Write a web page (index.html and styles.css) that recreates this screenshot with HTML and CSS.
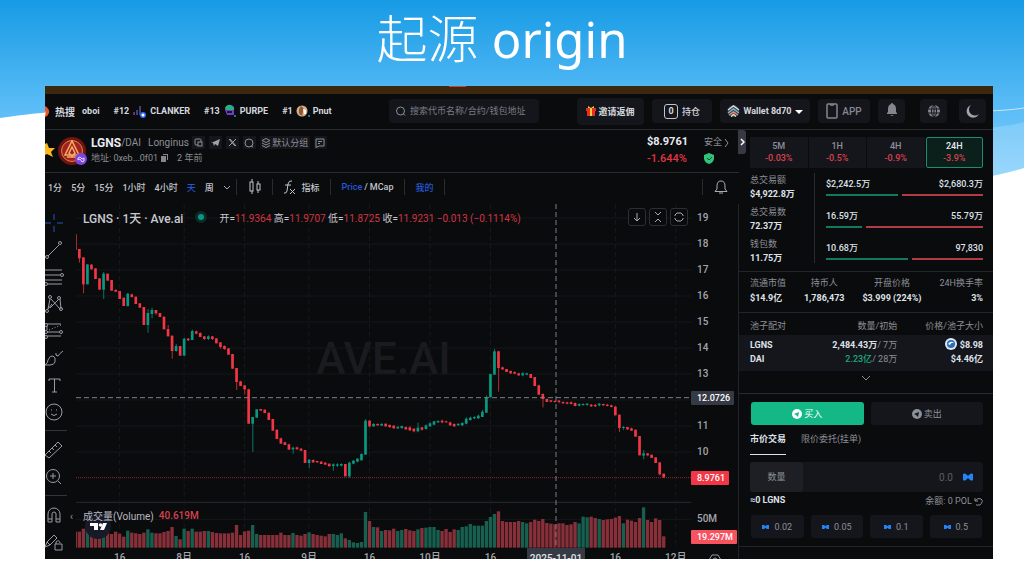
FILE: index.html
```html
<!DOCTYPE html>
<html lang="zh-CN">
<head>
    <meta charset="UTF-8">
    <meta name="viewport" content="width=device-width, initial-scale=1.0">
    <title>起源 origin</title>
    <link rel="stylesheet" href="styles.css">
</head>
<body>
    <!-- Slide background -->
    <svg class="slide-bg" viewBox="0 0 1024 200" preserveAspectRatio="none" aria-hidden="true">
        <defs>
            <linearGradient id="sky" x1="0" y1="0" x2="0" y2="1">
                <stop offset="0" stop-color="#179be5"/>
                <stop offset="0.6" stop-color="#5abcf6"/>
                <stop offset="1" stop-color="#84cffc"/>
            </linearGradient>
        </defs>
        <path fill="url(#sky)" d="M0 0H1024V168Q1000 175 980 178H60V111Q20 115 0 118Z"/>
        <path fill="#fff" fill-opacity="0.18" d="M980 128Q1005 127 1024 122V168Q1000 175 980 178Z"/>
        <path fill="none" stroke="#c4e6fc" d="M980 111Q1005 111 1024 108"/>
    </svg>

    <h1 class="slide-title">起源 <span>origin</span></h1>

    <div class="screen">
        <div class="strip"><span></span></div>

        <!-- Top bar -->
        <header class="topbar">
            <div class="ticker">
                <svg class="fire" width="5" height="12" viewBox="0 0 5 12"><path d="M0 1Q5 4 4 8Q3 11 0 12Z" fill="#f0522f"/><path d="M0 6Q2 8 0 11Z" fill="#ffb347"/></svg>
                <span class="hot">热搜</span>
                <span class="coin">oboi</span>
                <span class="coin">#12
                    <svg width="15" height="14" viewBox="0 0 15 14"><path d="M2 8v3M5 6v5M8 2v9" stroke="#4b3a78" stroke-width="2"/><circle cx="11" cy="11" r="3" fill="#2b6df0"/><circle cx="11" cy="11" r="1.5" fill="#fff"/></svg>
                    CLANKER</span>
                <span class="coin">#13
                    <svg width="14" height="14" viewBox="0 0 14 14"><path d="M2 6Q2 1 7 1T11 6V11H4Z" fill="#6c3fc4"/><path d="M2 4Q4 0 8 1L11 4V6H3Z" fill="#27b17e"/><path d="M4 8h5" stroke="#1c1330" stroke-width="2"/><circle cx="12" cy="12" r="1" fill="#289bb0"/></svg>
                    PURPE</span>
                <span class="coin">#1
                    <svg width="14" height="14" viewBox="0 0 14 14"><circle cx="6" cy="7" r="5.5" fill="#d9b28c"/><path d="M5 2Q9 4 7 8T9 12L4 11Q1 6 5 2Z" fill="#8b5a35"/><path d="M7 5l3 1v4H8Z" fill="#fff"/><circle cx="13" cy="12" r="1" fill="#289bb0"/></svg>
                    Pnut</span>
            </div>
            <label class="search">
                <svg width="10" height="10" viewBox="0 0 10 10" fill="none" stroke="#8d8f96"><circle cx="4.5" cy="5" r="4"/><path d="M7.5 8L9 9.5"/></svg>
                <input type="text" aria-label="搜索" placeholder="搜索代币名称/合约/钱包地址">
            </label>
            <nav class="actions">
                <button class="box invite">
                    <svg width="10" height="10" viewBox="0 0 10 10"><path d="M1 4h8v6H1zM0 2h10v3H0z" fill="#e5301f"/><path d="M4 2h2v8H4z" fill="#ffc933"/><path d="M5 2L2 0v2zM5 2l3-2v2z" fill="#ffc933"/></svg>
                    邀请返佣
                </button>
                <button class="box hold"><b class="count">0</b>持仓</button>
                <button class="box wallet">
                    <svg width="13" height="12" viewBox="0 0 13 12" fill="none" stroke-width="1.5"><circle cx="6.5" cy="6" r="6" fill="#2a4350"/><path d="M1 5l5.500-4L12 5" stroke="#e9d8cb"/><path d="M1 8l5.500-4L12 8" stroke="#7eb7cb"/><path d="M2 10l4.500-3 4.500 3" stroke="#ef8b72"/><path d="M4 11.500l2.500-2 2.500 2" stroke="#e9d8cb"/></svg>
                    Wallet 8d70
                    <svg width="8" height="5" viewBox="0 0 8 5"><path d="M0 1h8L4 5z" fill="#fff"/></svg>
                </button>
                <button class="box app">
                    <svg width="12" height="16" viewBox="0 0 12 16" fill="none" stroke="#85878d" stroke-width="1.5"><rect x="1" y="1" width="10" height="14" rx="1"/><path d="M4 2h4"/></svg>
                    APP
                </button>
                <button class="box icon bell" aria-label="通知">
                    <svg width="12" height="13" viewBox="0 0 12 13" fill="#85878d"><path d="M6 0Q7 0 7 1Q10 2 10 6V9L11 10V11H1V10L2 9V6Q2 2 5 1Q5 0 6 0ZM4 12h4l-2 1z"/></svg>
                </button>
                <button class="box icon globe" aria-label="语言">
                    <svg width="12" height="12" viewBox="0 0 12 12"><circle cx="6" cy="6" r="6" fill="#85878d"/><g fill="none" stroke="#15161c"><ellipse cx="6" cy="6" rx="2.5" ry="6"/><path d="M6 0v12M0 4h12M0 8h12"/></g></svg>
                </button>
                <button class="box icon moon" aria-label="主题">
                    <svg width="13" height="13" viewBox="0 0 13 13"><path d="M5 0A6.5 6.5 0 1 0 13 9A6 6 0 0 1 5 0Z" fill="#a3a5aa"/></svg>
                </button>
            </nav>
        </header>

        <div class="content">
            <main class="left-side">
                <!-- Token summary -->
                <section class="token">
                    <svg class="star" width="10" height="16" viewBox="0 0 10 16"><path d="M2 1l2 5h6L6 10l2 5-6-3-2 1V2z" fill="#f9b91b"/></svg>
                    <svg class="logo" width="30" height="30" viewBox="0 0 30 30"><circle cx="14" cy="14" r="14" fill="#6f1313"/><circle cx="14" cy="14" r="10.500" fill="#a5221c" stroke="#d98a45"/><path d="M14 4L7 18h14zM14 10l-3 6 3 3 3-3zM9 20h10" fill="none" stroke="#f0b069" stroke-width="1.500"/><circle cx="23" cy="22" r="6" fill="#7d45e0"/><path d="M20 21l2-1 2 2 2-1v3l-2 1-2-3-2 1z" fill="none" stroke="#fff" stroke-width="0.8"/></svg>
                    <div class="token-info">
                        <div class="token-line">
                            <strong>LGNS</strong><span>/DAI</span><span class="full-name">Longinus</span>
                            <a href="#" class="chip" aria-label="网站"><svg width="9" height="9" viewBox="0 0 9 9" fill="none" stroke="#8d8f96"><rect x="1" y="1" width="6" height="6" rx="1"/><rect x="4" y="4" width="4" height="4" fill="#15161c"/></svg></a>
                            <a href="#" class="chip" aria-label="Telegram"><svg width="9" height="9" viewBox="0 0 9 9"><path d="M0 5L9 1 7 8 4 6 3 8 2 5z" fill="#a0a2a8"/></svg></a>
                            <a href="#" class="chip" aria-label="X"><svg width="9" height="9" viewBox="0 0 9 9" fill="none" stroke="#a0a2a8"><path d="M1 1l6 7M2 1l6 7M8 1L1 8"/></svg></a>
                            <a href="#" class="chip" aria-label="查找"><svg width="10" height="10" viewBox="0 0 10 10" fill="none" stroke="#8d8f96"><circle cx="5" cy="5" r="4"/><path d="M7 8l2 1"/></svg></a>
                            <button class="chip group"><svg width="10" height="10" viewBox="0 0 10 10" fill="none" stroke="#8d8f96"><path d="M5 0.500l4 2-4 2-4-2zM1 5l4 2 4-2M1 7.500l4 2 4-2"/></svg>默认分组</button>
                            <button class="chip" aria-label="备注"><svg width="10" height="10" viewBox="0 0 10 10" fill="none" stroke="#8d8f96"><path d="M1 1h8v7H4L1 9.500zM3 3.500h4M3 5.500h2"/></svg></button>
                        </div>
                        <div class="token-line addr">
                            <span>地址: 0xeb...0f01</span>
                            <svg width="7" height="8" viewBox="0 0 7 8" fill="#85878d"><path d="M2 0h5v6H6V1H2zM0 2h5v6H0z"/></svg>
                            <span class="age">2 年前</span>
                        </div>
                    </div>
                    <div class="price"><b>$8.9761</b><em>-1.644%</em></div>
                    <div class="safe">
                        <span>安全<svg width="5" height="8" viewBox="0 0 5 8" fill="none" stroke="#8d8f96"><path d="M1 0l3 4-3 4"/></svg></span>
                        <svg width="10" height="11" viewBox="0 0 10 11"><path d="M5 0l5 2v4Q9 10 5 11Q1 10 0 6V2z" fill="#2fc47c"/><path d="M3 5l2 2 3-3" fill="none" stroke="#0a4c2c"/></svg>
                    </div>
                </section>

                <!-- Chart toolbar -->
                <div class="toolbar">
                    <div class="ranges">
                        <button>1分</button><button>5分</button><button>15分</button><button>1小时</button><button>4小时</button><button class="on">天</button><button>周</button>
                        <svg width="8" height="5" viewBox="0 0 8 5" fill="none" stroke="#a9abb3"><path d="M1 1l3 3 3-3"/></svg>
                    </div>
                    <button class="cell candle" aria-label="图表类型"><svg width="12" height="16" viewBox="0 0 12 16" fill="none" stroke="#c3c5cc"><path d="M3 0v3M3 12v3M9 2v3M9 11v3"/><rect x="1" y="3" width="3" height="9"/><rect x="8" y="5" width="3" height="6"/></svg></button>
                    <button class="cell fx"><svg width="13" height="15" viewBox="0 0 13 15" fill="none" stroke="#c3c5cc"><path d="M9 1Q6 0 5 4L4 11Q3 14 1 13M2 5h6M7 9l5 5M12 9l-5 5"/></svg>指标</button>
                    <span class="cell pm"><button class="on">Price</button> / <button>MCap</button></span>
                    <button class="cell mine on">我的</button>
                    <button class="cell alarm" aria-label="提醒"><svg width="14" height="15" viewBox="0 0 14 15" fill="none" stroke="#a9abb3"><path d="M1 11.500L3 9V6Q3 1 7 1T11 6V9L13 11.500ZM5 13h4"/></svg></button>
                </div>

                <!-- Chart -->
                <div class="chart">
                    <div class="tools">
                        <button aria-label="十字"><svg viewBox="0 0 20 20"><path d="M10 1v6M10 13v6M1 10h6M13 10h6"/></svg></button>
                        <button aria-label="线"><svg viewBox="0 0 20 20"><path d="M4 16L15 5"/><circle cx="3" cy="17" r="1.500"/><circle cx="16" cy="3" r="1.500"/></svg></button>
                        <button aria-label="斐波那契"><svg viewBox="0 0 20 20"><path d="M1 3h17M1 8h15M1 13h17M4 17h14"/><circle cx="18" cy="8" r="1.500"/><circle cx="2" cy="17" r="1.500"/></svg></button>
                        <button aria-label="形态"><svg viewBox="0 0 20 20"><path d="M4 15L6 5M7 5l9 10M6 14l9-9M16 5l1 10M4 15l4-5"/><circle cx="3" cy="17" r="1.500"/><circle cx="6" cy="3" r="1.500"/><circle cx="15" cy="4" r="1.500"/><circle cx="17" cy="15" r="1.500"/></svg></button>
                        <button aria-label="预测"><svg viewBox="0 0 20 20"><path d="M3 3h14M3 11h12M3 15h14M3 5v4"/><path d="M5 9l12-5" stroke-dasharray="1 2"/><circle cx="2" cy="4" r="1.500"/><circle cx="2" cy="11" r="1.500"/><circle cx="17" cy="11" r="1.500"/><circle cx="2" cy="16" r="1.500"/></svg></button>
                        <button aria-label="画笔"><svg viewBox="0 0 20 20"><path d="M1 17Q4 15 4 12Q6 7 9 8T11 14Q10 17 6 17ZM12 5Q11 8 14 8Q15 6 19 3"/></svg></button>
                        <button aria-label="文字"><svg viewBox="0 0 20 20"><path d="M5 6V4h11v2M10.500 4v13M8 17h5"/></svg></button>
                        <button aria-label="表情"><svg viewBox="0 0 20 20"><circle cx="10" cy="10" r="8"/><path d="M7 8h1M12 8h1M7 12q3 3 6 0"/></svg></button>
                        <hr>
                        <button aria-label="测量"><svg viewBox="0 0 20 20"><path d="M1 15L14 2l4 4L5 18zM5 11l2 2M8 8l2 2M11 5l2 2"/></svg></button>
                        <button aria-label="放大"><svg viewBox="0 0 20 20"><circle cx="9" cy="9" r="6.500"/><path d="M14 14l3 3M9 6v6M6 9h6"/></svg></button>
                        <hr>
                        <button aria-label="磁铁"><svg viewBox="0 0 20 20"><path d="M4 17V9a6 6 0 0 1 12 0v8h-4V9a2 2 0 0 0-4 0v8zM4 14h4M12 14h4"/></svg></button>
                        <button aria-label="锁定"><svg viewBox="0 0 20 20"><path d="M1 15l2-5 7-7 3 3-7 7zM3 10l3 3M11 12h7v6h-7zM12 12v-2q3-3 4 1"/></svg></button>
                    </div>

                    <div class="plot">
                        <div class="watermark">AVE.AI</div>
                        <svg id="plot" viewBox="0 12 1845 1032" preserveAspectRatio="none"></svg>
                        <div class="legend">
                            <span class="pair">LGNS · 1天 · Ave.ai</span>
                            <i class="live"></i>
                            <span class="ohlc">开=<b>11.9364</b> 高=<b>11.9707</b> 低=<b>11.8725</b> 收=<b>11.9231</b> <b>−0.013 (−0.1114%)</b></span>
                        </div>
                        <div class="pane-buttons">
                            <button aria-label="下移"><svg width="12" height="12" viewBox="0 0 12 12"><path d="M6 2v8M3 7l3 3 3-3"/></svg></button>
                            <button aria-label="折叠"><svg width="12" height="12" viewBox="0 0 12 12"><path d="M3 1l3 3 3-3M3 11l3-3 3 3"/></svg></button>
                            <button aria-label="最大化"><svg width="12" height="12" viewBox="0 0 12 12"><path d="M2 5V4l2-2h4l2 2v1M2 7v1l2 2h4l2-2V7"/></svg></button>
                        </div>
                        <div class="volume-legend"><span>成交量(Volume)</span><b>40.619M</b></div>
                        <svg class="tv" width="26" height="26" viewBox="0 0 26 26"><circle cx="13" cy="13" r="13" fill="#181b27"/><path d="M5 10h8v7h-4v-4H5zM18 10h4l-3 7h-4z" fill="#fff"/><circle cx="15.500" cy="12" r="1.800" fill="#fff"/></svg>
                        <span class="fold">‹</span>
                    </div>

                    <div class="price-axis" id="price-axis"></div>
                    <div class="time-axis" id="time-axis"></div>
                    <button class="axis-gear" aria-label="设置"><svg width="12" height="12" viewBox="0 0 12 12" fill="none" stroke="#9a9ca4"><path d="M3 1h6l3 5-3 5H3L0 6z"/><circle cx="6" cy="6" r="2"/></svg></button>
                </div>
            </main>

            <!-- Trade panel -->
            <aside class="panel">
                <button class="handle" aria-label="收起"><svg width="5" height="8" viewBox="0 0 5 8" fill="none" stroke="#fff" stroke-width="1.500"><path d="M1 1l3 3-3 3"/></svg></button>
                <div class="periods">
                    <button>5M<b>-0.03%</b></button>
                    <button>1H<b>-0.5%</b></button>
                    <button>4H<b>-0.9%</b></button>
                    <button class="on">24H<b>-3.9%</b></button>
                </div>

                <div class="stats">
                    <dl>
                        <dt>总交易额</dt><dd>$4,922.8万</dd>
                        <dt>总交易数</dt><dd>72.37万</dd>
                        <dt>钱包数</dt><dd>11.75万</dd>
                    </dl>
                    <div class="ratios">
                        <div class="ratio"><span>$2,242.5万</span><span>$2,680.3万</span><i style="width: 46%"></i><i></i></div>
                        <div class="ratio"><span>16.59万</span><span>55.79万</span><i style="width: 23%"></i><i></i></div>
                        <div class="ratio"><span>10.68万</span><span>97,830</span><i style="width: 52%"></i><i></i></div>
                    </div>
                </div>

                <div class="market">
                    <div>流通市值<b>$14.9亿</b></div>
                    <div>持币人<b>1,786,473</b></div>
                    <div>开盘价格<b>$3.999 (224%)</b></div>
                    <div>24H换手率<b>3%</b></div>
                </div>

                <table class="pool">
                    <thead>
                        <tr><th>池子配对</th><th>数量/初始</th><th>价格/池子大小</th></tr>
                    </thead>
                    <tbody>
                        <tr><td>LGNS</td><td>2,484.43万<span>/ 7万</span></td><td><svg width="12" height="12" viewBox="0 0 12 12"><circle cx="6" cy="6" r="6" fill="#dce9f5"/><circle cx="6" cy="6" r="4" fill="#2f6db5"/><path d="M3 6q3-4 6-1q-3-1-4 2z" fill="#fff"/></svg> $8.98</td></tr>
                        <tr><td>DAI</td><td><em>2.23亿</em><span>/ 28万</span></td><td>$4.46亿</td></tr>
                    </tbody>
                </table>
                <button class="more" aria-label="展开"><svg width="10" height="6" viewBox="0 0 10 6" fill="none" stroke="#8d8f96"><path d="M1 1l4 4 4-4"/></svg></button>

                <div class="sides">
                    <button class="buy"><svg width="10" height="10" viewBox="0 0 10 10"><circle cx="5" cy="5" r="5" fill="#fff"/><path d="M2 5l5-2-1 5-2-2z" fill="#14b886"/></svg>买入</button>
                    <button class="sell"><svg width="10" height="10" viewBox="0 0 10 10"><circle cx="5" cy="5" r="5" fill="#8d8f96"/><path d="M2 5l5-2-1 5-2-2z" fill="#15161c"/></svg>卖出</button>
                </div>
                <div class="modes">
                    <button class="on">市价交易</button>
                    <button>限价委托(挂单)</button>
                </div>
                <div class="amount">
                    <label for="qty">数量</label>
                    <input id="qty" type="text" placeholder="0.0">
                    <svg width="10" height="8" viewBox="0 0 10 8"><path d="M0 1q1-1 3 0l2 2 2-2q2-1 3 0v6q-1 1-3 0L5 5 3 7Q1 8 0 7z" fill="#2284f5"/></svg>
                </div>
                <div class="balance">
                    <b>≈0 LGNS</b>
                    <span>余额: 0 POL <svg width="9" height="9" viewBox="0 0 9 9" fill="none" stroke="#8d8f96"><path d="M1 1v3h3M1 4Q4 0 7 2T6 8H2"/></svg></span>
                </div>
                <div class="quick">
                    <button><svg width="7" height="6" viewBox="0 0 10 8"><path d="M0 1h3l2 2 2-2h3v6H7L5 5 3 7H0z" fill="#2284f5"/></svg>0.02</button>
                    <button><svg width="7" height="6" viewBox="0 0 10 8"><path d="M0 1h3l2 2 2-2h3v6H7L5 5 3 7H0z" fill="#2284f5"/></svg>0.05</button>
                    <button><svg width="7" height="6" viewBox="0 0 10 8"><path d="M0 1h3l2 2 2-2h3v6H7L5 5 3 7H0z" fill="#2284f5"/></svg>0.1</button>
                    <button><svg width="7" height="6" viewBox="0 0 10 8"><path d="M0 1h3l2 2 2-2h3v6H7L5 5 3 7H0z" fill="#2284f5"/></svg>0.5</button>
                </div>
            </aside>
        </div>
    </div>

    <script src="chart.js"></script>
</body>
</html>
```

FILE: styles.css
```css
body {
    margin: 0;
    font-family: Roboto, "Noto Sans CJK SC", sans-serif;
    font-size: 10px;
    color: #d5d7de;
    background-color: white;
}
button {
    margin: 0;
    padding: 0;
    border: none;
    background: none;
    font: inherit;
    color: inherit;
    white-space: nowrap;
    cursor: pointer;
}
input {
    border: none;
    background: none;
    font: inherit;
    color: inherit;
    outline: none;
    min-width: 0;
}
svg {
    flex-shrink: 0;
}
em, i {
    font-style: normal;
}

/* Slide */
.slide-bg {
    position: absolute;
    top: 0;
    left: 0;
    width: 100%;
    height: 200px;
    z-index: -1;
}
.slide-title {
    margin: 0;
    padding-right: 20px;
    height: 86px;
    line-height: 76px;
    text-align: center;
    font-family: "Open Sans", "Noto Sans CJK SC", sans-serif;
    font-size: 51px;
    font-weight: 300;
    color: white;
}
.slide-title span {
    font-family: "Noto Sans", sans-serif;
    font-size: 49px;
    font-weight: 400;
}
.screen {
    margin: 0 31px 7px 45px;
    background-color: #0a0b0d;
    overflow: hidden;
}
.strip {
    height: 8px;
    background-color: #3b280f;
}
.strip span {
    display: block;
    width: 17px;
    height: 1px;
    margin-left: 404px;
    background-color: #c9452f;
}

/* Top bar */
.topbar {
    display: flex;
    align-items: center;
    height: 34px;
    padding-bottom: 1px;
    border-bottom: 1px solid #292b30;
}
.ticker {
    display: flex;
    align-items: center;
    width: 344px;
    font-weight: 700;
    white-space: nowrap;
}
.ticker .hot {
    margin: 0 7px 0 5px;
}
.coin {
    display: flex;
    align-items: center;
    gap: 3px;
    margin-right: 14px;
    font-size: 9px;
}
.search {
    display: flex;
    align-items: center;
    gap: 4px;
    width: 143px;
    height: 24px;
    padding-left: 7px;
    border-radius: 4px;
    background-color: #15161c;
}
.search input {
    flex: 1;
    padding: 0;
    font-size: 9px;
}
.search input::placeholder {
    color: #7a7c84;
}
.actions {
    display: flex;
    align-items: center;
    gap: 8px;
    margin-left: auto;
    margin-right: 7px;
}
.box {
    display: flex;
    align-items: center;
    justify-content: center;
    gap: 4px;
    height: 24px;
    border-radius: 4px;
    background-color: #15161c;
    font-size: 9px;
    font-weight: 500;
}
.invite {
    width: 67px;
    height: 27px;
    gap: 2px;
    font-weight: 700;
}
.hold {
    width: 60px;
}
.count {
    width: 12px;
    border: 1px solid #c3c5cc;
    border-radius: 3px;
    line-height: 13px;
}
.wallet {
    width: 90px;
    gap: 3px;
    font-weight: 700;
}
.app {
    width: 52px;
    font-size: 10px;
    color: #85878d;
}
.icon {
    width: 27px;
}
.bell svg {
    margin-bottom: 3px;
}
.globe {
    margin-left: 7px;
}
.moon {
    margin-left: 4px;
}

.content {
    display: flex;
}
.left-side {
    flex: 1;
    min-width: 0;
}

/* Token summary */
.token {
    display: flex;
    align-items: center;
    height: 40px;
    padding-bottom: 2px;
    border-bottom: 1px solid #292b30;
    color: #8d8f96;
}
.logo {
    margin: 3px 3px 0 3px;
}
.token-line {
    display: flex;
    align-items: center;
    height: 15px;
    white-space: nowrap;
}
.token-line strong {
    font-size: 12px;
    color: #e8eaf0;
}
.full-name {
    margin: 0 3px 0 7px;
}
.chip {
    display: flex;
    align-items: center;
    justify-content: center;
    width: 13px;
    height: 13px;
    margin-right: 4px;
    background-color: #15161c;
}
.group {
    width: 50px;
    gap: 1px;
    font-size: 9px;
}
.addr {
    gap: 3px;
    font-size: 9px;
}
.age {
    margin-left: 6px;
}
.price {
    margin-left: auto;
    margin-right: 15px;
    width: 42px;
}
.price b, .price em {
    display: block;
    font-size: 11px;
    line-height: 17px;
    color: #e8eaf0;
}
.price em {
    font-weight: 500;
    color: #e03545;
}
.safe {
    width: 35px;
    font-size: 9px;
}
.safe span {
    display: flex;
    align-items: center;
    gap: 2px;
    line-height: 17px;
}
.safe > svg {
    display: block;
    margin: 2px 0;
}

/* Chart toolbar */
.toolbar {
    display: flex;
    align-items: center;
    height: 28px;
    padding-bottom: 3px;
    font-size: 9px;
    color: #c3c5cc;
}
.toolbar button {
    font-weight: 500;
}
.ranges {
    display: flex;
    align-items: center;
    gap: 9px;
    width: 191px;
    padding-left: 3px;
    box-sizing: border-box;
}
.toolbar .on {
    color: #2557d6;
}
.cell {
    display: flex;
    align-items: center;
    justify-content: center;
    height: 16px;
    border-left: 1px solid #292b30;
    box-sizing: border-box;
}
.candle {
    width: 36px;
}
.fx {
    width: 58px;
    gap: 5px;
}
.pm {
    width: 74px;
    gap: 2px;
    font-weight: 500;
}
.mine {
    width: 41px;
    border-right: 1px solid #292b30;
}
.alarm {
    width: 37px;
    margin-left: auto;
}

/* Chart */
.chart {
    display: grid;
    grid-template-columns: 31px 1fr 48px;
    grid-template-rows: 344px 11px;
}
.tools {
    grid-row: 1 / 3;
    padding-top: 5px;
    overflow: hidden;
}
.tools button {
    display: block;
    width: 19px;
    height: 27px;
}
.tools svg {
    display: block;
    width: 20px;
    height: 20px;
    margin-left: -1px;
    fill: none;
    stroke: #9a9ca4;
}
.tools button[aria-label="十字"] svg {
    stroke: #2453c4;
}
.tools hr {
    width: 22px;
    height: 1px;
    margin: 5px 0;
    border: none;
    background-color: #33353b;
}
.plot {
    position: relative;
}
#plot {
    position: relative;
    display: block;
    width: 100%;
    height: 344px;
}
.watermark {
    position: absolute;
    top: 128px;
    width: 100%;
    text-align: center;
    font-size: 44px;
    line-height: 54px;
    font-weight: 500;
    color: #1a1b1e;
}
.legend {
    position: absolute;
    top: 5px;
    left: 7px;
    display: flex;
    align-items: center;
    height: 16px;
    white-space: nowrap;
    color: #c8cad2;
}
.pair {
    font-size: 12px;
    font-weight: 500;
}
.live {
    width: 6px;
    height: 6px;
    margin: 0 12px;
    border: 3px solid #0b2b29;
    border-radius: 50%;
    background-color: #089981;
}
.legend b {
    font-weight: 400;
    color: #d23442;
}
.pane-buttons {
    position: absolute;
    top: 4px;
    right: 3px;
    display: flex;
    gap: 3px;
}
.pane-buttons button {
    display: flex;
    align-items: center;
    justify-content: center;
    width: 18px;
    height: 18px;
    border: 1px solid #2c2e36;
    border-radius: 3px;
    background-color: #0a0b0d;
    box-sizing: border-box;
}
.pane-buttons svg {
    fill: none;
    stroke: #a9abb3;
}
.volume-legend {
    position: absolute;
    top: 303px;
    left: 7px;
    display: flex;
    align-items: center;
    gap: 5px;
    height: 16px;
    z-index: 1;
    color: #b8bac2;
}
.volume-legend b {
    font-weight: 500;
    color: #d9414e;
}
.tv {
    position: absolute;
    top: 309px;
    left: 9px;
}
.fold {
    position: absolute;
    top: 307px;
    left: -6px;
    color: #9a9ca4;
}
.price-axis {
    position: relative;
    border-right: 1px solid #22242a;
}
.price-axis span {
    position: absolute;
    left: 0;
    padding: 0 6px;
    line-height: 14px;
    font-weight: 500;
    color: #a4a6ae;
    transform: translateY(-50%);
}
.price-axis .tag {
    padding: 0 4px 0 6px;
    border-radius: 1px;
    font-size: 9px;
    color: white;
    background-color: #f23645;
}
.price-axis .cross {
    background-color: #363a45;
}
.price-axis .vol {
    background-color: #f7525f;
}
.time-axis {
    position: relative;
}
.time-axis span {
    position: absolute;
    top: 3px;
    line-height: 14px;
    font-weight: 500;
    white-space: nowrap;
    color: #a4a6ae;
    transform: translateX(-50%);
}
.time-axis .cross {
    top: 0;
    width: 58px;
    padding-top: 4px;
    text-align: center;
    color: #dfe1e8;
    background-color: #363a45;
}
.axis-gear {
    height: 11px;
    overflow: hidden;
    border-right: 1px solid #22242a;
}
.axis-gear svg {
    display: block;
    margin: 6px auto 0;
}

/* Trade panel */
.panel {
    position: relative;
    width: 254px;
    font-size: 9px;
    color: #8d8f96;
}
.panel b, .panel dd, .pool td {
    font-weight: 700;
    color: #dfe1e8;
}
.handle {
    position: absolute;
    top: 0;
    left: -1px;
    display: flex;
    align-items: center;
    justify-content: center;
    width: 8px;
    height: 24px;
    border-radius: 0 3px 3px 0;
    background-color: #363a45;
}
.periods {
    display: grid;
    grid-template-columns: repeat(4, 1fr);
    gap: 1px;
    padding: 7px 10px 0 11px;
}
.periods button {
    height: 31px;
    padding-bottom: 2px;
    border: 1px solid #15161c;
    background-color: #15161c;
    line-height: 12px;
    font-weight: 500;
}
.panel .periods b {
    display: block;
    font-weight: 500;
    color: #d9414e;
}
.periods .on {
    border-color: #1b8f6c;
    border-radius: 2px;
    color: #e8eaf0;
    background-color: #0b1f1b;
}
.stats {
    display: flex;
    height: 99px;
    padding: 4px 10px 0 11px;
    border-bottom: 1px solid #22242a;
}
.stats dl {
    width: 64px;
    height: 90px;
    margin: 1px 11px 0 0;
    border-right: 1px solid #292b30;
    line-height: 14px;
}
.stats dt {
    height: 14px;
}
.stats dd {
    margin: 0;
    height: 18px;
    white-space: nowrap;
}
.ratios {
    flex: 1;
}
.ratio {
    display: flex;
    flex-wrap: wrap;
    align-content: flex-start;
    height: 32px;
    padding-top: 5px;
    box-sizing: border-box;
    font-weight: 500;
    line-height: 14px;
    color: #dfe1e8;
}
.ratio span {
    width: 50%;
    height: 17px;
}
.ratio span + span {
    text-align: right;
}
.ratio i {
    height: 2px;
    background-color: #13795c;
}
.ratio i + i {
    flex: 1;
    margin-left: 4px;
    background-color: #b03c46;
}
.market {
    display: flex;
    justify-content: space-between;
    height: 36px;
    padding: 4px 10px 0 11px;
    border-bottom: 1px solid #22242a;
    line-height: 15px;
    text-align: center;
    white-space: nowrap;
}
.market b {
    display: block;
}
.market div:first-child {
    text-align: left;
}
.market div:last-child {
    text-align: right;
}
.pool {
    width: 100%;
    margin-top: 5px;
    border-collapse: collapse;
    font-size: 9px;
}
.pool th {
    height: 13px;
    padding: 2px 0;
    line-height: 13px;
    font-weight: 400;
    text-align: right;
}
.pool td {
    height: 14px;
    padding: 3px 0 0;
    line-height: 14px;
    text-align: right;
}
.pool tr + tr td {
    padding: 0 0 5px;
}
.pool tr th:first-child, .pool tr td:first-child {
    padding-left: 11px;
    text-align: left;
}
.pool tr th:last-child, .pool tr td:last-child {
    padding-right: 10px;
}
.pool tbody {
    background-color: #15161c;
}
.pool td svg {
    vertical-align: top;
}
.pool span {
    font-weight: 400;
    color: #8d8f96;
}
.pool em {
    font-weight: 500;
    color: #18a97c;
}
.more {
    display: block;
    width: 100%;
    height: 23px;
    padding-bottom: 9px;
    border-bottom: 1px solid #292b30;
}
.sides {
    display: grid;
    grid-template-columns: 1fr 1fr;
    gap: 7px;
    padding: 8px 10px 0 12px;
}
.sides button {
    display: flex;
    align-items: center;
    justify-content: center;
    gap: 2px;
    height: 23px;
    border-radius: 3px;
    background-color: #15161c;
}
.sides .buy {
    color: white;
    background-color: #14b886;
}
.modes {
    display: flex;
    gap: 15px;
    padding: 5px 11px 0;
}
.modes button {
    height: 25px;
    padding-bottom: 8px;
    border-bottom: 1px solid transparent;
}
.modes .on {
    border-color: #dfe1e8;
    font-weight: 700;
    color: #dfe1e8;
}
.amount {
    display: flex;
    align-items: center;
    height: 30px;
    margin: 7px 10px 0 11px;
    border-radius: 3px;
    background-color: #15161c;
}
.amount label {
    width: 53px;
    line-height: 30px;
    border-radius: 3px;
    text-align: center;
    background-color: #1e1f24;
}
.amount input {
    flex: 1;
    padding: 0;
    font-size: 10px;
    text-align: right;
}
.amount input::placeholder {
    color: #5c5e66;
}
.amount svg {
    margin: 0 10px;
}
.balance {
    display: flex;
    justify-content: space-between;
    align-items: center;
    height: 16px;
    padding: 0 10px 0 11px;
}
.balance svg {
    vertical-align: middle;
}
.quick {
    display: grid;
    grid-template-columns: repeat(4, 1fr);
    gap: 7px;
    padding: 7px 11px 8px 12px;
    border-bottom: 1px solid #22242a;
}
.quick button {
    display: flex;
    align-items: center;
    justify-content: center;
    gap: 5px;
    height: 23px;
    border-radius: 3px;
    background-color: #15161c;
}
```

FILE: chart.js
```js
// One entry per day: direction, body top, body bottom, wick top, wick bottom, volume top
const days = `
r 103 150 103 150 455|r 147 175 147 188 455|r 172 253 172 280 446|g 193 253 193 253 447|r 194 208 192 208 455|r 205 237 205 237 458|r 235 269 235 269 455
g 221 269 216 297 458|r 221 242 221 242 458|r 240 272 240 272 462|r 270 275 267 275 455|r 273 297 273 297 461|r 293 318 293 318 470|g 281 318 278 320 452
r 283 291 281 293 458|r 290 312 290 312 460|r 310 323 310 323 462|r 321 375 321 375 458|g 339 375 327 398 448|g 330 342 323 355 458|r 330 340 330 344 460
r 339 351 339 351 460|r 350 388 350 388 456|r 387 409 375 409 453|r 407 453 407 476 441|g 438 453 432 455 468|r 438 467 438 467 478|g 416 467 413 467 446
r 416 421 414 423 453|g 393 420 389 420 446|r 394 401 392 403 455|r 399 411 397 411 455|r 409 417 409 420 453|g 409 417 406 420 453|r 409 417 409 420 456
r 415 430 415 430 459|r 427 441 427 446 460|r 438 447 436 450 460|r 445 464 445 464 460|r 462 506 462 506 458|r 504 546 504 570 435|r 544 558 542 558 465
r 556 568 556 584 454|r 568 671 566 671 452|g 651 671 651 756 435|g 628 653 628 653 462|r 627 632 627 632 465|r 629 639 629 639 465|r 638 660 638 660 465
r 657 692 657 692 465|r 689 717 689 717 465|r 715 731 713 731 458|r 727 735 725 735 465|r 733 749 731 749 465|g 743 748 740 761 459|r 742 748 740 749 465
r 746 752 744 754 467|r 750 789 750 789 462|g 779 789 777 804 457|r 780 787 778 789 462|r 783 787 783 789 465|r 785 792 783 792 467|r 788 794 786 794 469
r 791 799 791 799 462|g 793 798 790 812 462|g 793 797 790 801 465|g 792 797 790 799 460|r 792 829 792 829 475|g 788 829 785 833 480|g 782 791 780 793 487
g 776 785 774 787 489|g 762 781 760 781 486|g 662 764 657 764 396|r 662 679 660 683 423|g 672 679 669 681 441|r 672 676 670 677 442|g 672 677 669 677 453
r 671 679 671 680 450|r 675 681 673 684 451|r 677 685 675 686 446|g 681 685 677 687 453|g 678 684 677 687 450|r 681 688 680 690 447|r 682 691 679 693 451
r 686 694 684 697 453|g 683 694 668 697 448|r 682 689 682 692 444|g 676 687 673 689 443|g 670 679 667 681 441|g 664 674 663 676 441|g 663 667 661 669 450
r 662 667 659 670 453|r 664 667 662 669 447|r 667 676 665 678 456|r 672 679 670 681 448|g 671 676 671 677 450|g 669 676 667 678 441|g 656 671 652 673 439
g 653 660 650 662 432|g 651 655 649 657 437|g 647 655 644 657 437|g 635 651 630 651 437|g 592 638 586 638 423|g 522 592 522 592 411|g 454 524 447 524 402
r 454 504 452 575 394|r 502 508 500 510 423|r 507 516 507 516 426|r 513 520 511 522 426|r 516 521 514 523 426|r 520 526 518 528 423|g 520 526 516 529 426
g 520 524 518 526 430|r 522 534 522 534 426|r 531 558 531 558 419|r 556 584 554 584 423|r 582 597 580 622 417|r 597 606 595 606 429|r 601 605 600 607 431
r 603 606 601 608 433|r 602 606 600 610 430|r 606 610 604 611 430|r 607 611 605 613 435|r 607 612 604 613 433|r 609 618 607 619 426|g 612 617 610 619 430
g 612 615 610 617 410|g 611 615 610 617 412|r 614 619 612 621 410|r 615 619 612 621 414|g 611 616 609 619 417|r 612 616 611 617 420|r 614 618 612 619 418
r 616 621 614 622 417|r 620 646 618 646 413|r 644 684 644 696 408|g 681 684 678 690 430|r 681 688 681 690 419|r 685 692 683 693 422|r 689 710 689 710 426
r 708 766 708 766 414|g 760 767 750 778 382|r 760 766 760 769 420|r 764 774 764 774 426|r 772 789 772 789 415|r 787 823 787 826 420|r 821 833 821 833 469`
    .trim().split(/[|\n]/).map(row => row.split(" "));

const STEP = 12.09;
const FIRST = -2;
const VOLUME_OFFSET = 540;
const VOLUME_BASE = 1043;
const WIDTH = 1845;
const TOP = 12;
const HEIGHT = 1032;

const plot = document.getElementById("plot");

function rect(x, y, width, height, fill) {
    const el = document.createElementNS("http://www.w3.org/2000/svg", "rect");
    el.setAttribute("x", x);
    el.setAttribute("y", y);
    el.setAttribute("width", width);
    el.setAttribute("height", height);
    el.setAttribute("fill", fill);
    plot.appendChild(el);
}

function line(x1, y1, x2, y2, stroke, dash) {
    const el = document.createElementNS("http://www.w3.org/2000/svg", "line");
    el.setAttribute("x1", x1);
    el.setAttribute("y1", y1);
    el.setAttribute("x2", x2);
    el.setAttribute("y2", y2);
    el.setAttribute("stroke", stroke);
    el.setAttribute("stroke-width", 3);
    if (dash) el.setAttribute("stroke-dasharray", dash);
    plot.appendChild(el);
}

function dayX(i) {
    return FIRST + i * STEP;
}

function priceY(price) {
    return 54 + (19 - price) * 78;
}

function label(parentId, text, side, percent, className) {
    const el = document.createElement("span");
    el.textContent = text;
    el.style[side] = percent + "%";
    if (className) el.className = className;
    document.getElementById(parentId).appendChild(el);
}

// Grid and price labels
for (let price = 19; price >= 10; price--) {
    line(0, priceY(price), WIDTH, priceY(price), "#15171a");
    if (price !== 12) label("price-axis", price, "top", (priceY(price) - TOP) / HEIGHT * 100);
}
line(0, 958, WIDTH, 958, "#15171a");
line(0, 907, WIDTH, 907, "#292b30");

const ticks = [[11, "16"], [27, "8月"], [42, "16"], [58, "9月"], [73, "16"], [88, "10月"], [103, "16"], [134, "16"], [149, "12月"]];
ticks.forEach(([i, text]) => {
    line(dayX(i), TOP, dayX(i), VOLUME_BASE, "#17191c", "15 9");
    label("time-axis", text, "left", dayX(i) / WIDTH * 100);
});

// Candles and volume
days.forEach(([dir, top, bottom, high, low, volume], i) => {
    const x = dayX(i);
    const up = dir === "g";
    const volumeY = Number(volume) + VOLUME_OFFSET;
    rect(x - 5, volumeY, 10, VOLUME_BASE - volumeY, up ? "#17604f" : "#883039");
    rect(x - 1, high, 3, low - high, up ? "#0a7665" : "#b52c38");
    rect(x - 4, top, 8, bottom - top, up ? "#089981" : "#f23645");
});

// Last price and crosshair
line(0, 833, WIDTH, 833, "#8a2a34", "3 3");
line(0, 593, WIDTH, 593, "#7d7f86", "15 9");
line(1440, TOP, 1440, VOLUME_BASE, "#7d7f86", "15 9");

label("price-axis", "50M", "top", (958 - TOP) / HEIGHT * 100);
label("price-axis", "12.0726", "top", (593 - TOP) / HEIGHT * 100, "tag cross");
label("price-axis", "8.9761", "top", (833 - TOP) / HEIGHT * 100, "tag");
label("price-axis", "19.297M", "top", (1010 - TOP) / HEIGHT * 100, "tag vol");
label("time-axis", "2025-11-01", "left", 1440 / WIDTH * 100, "cross");
```
